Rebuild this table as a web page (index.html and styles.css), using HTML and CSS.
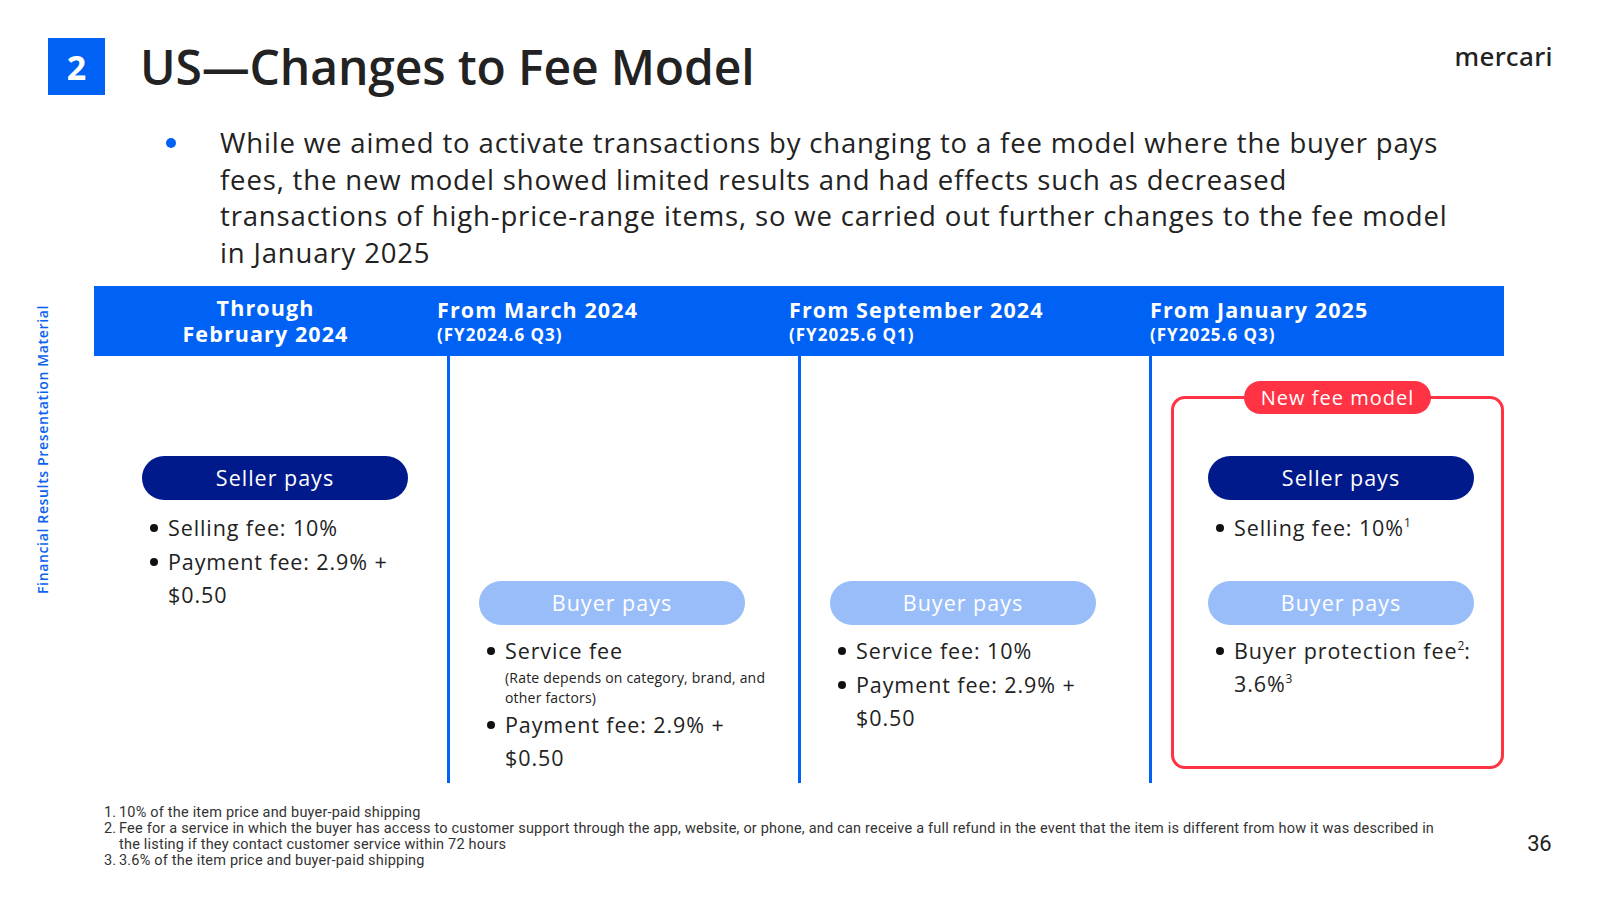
FILE: index.html
```html
<!DOCTYPE html>
<html lang="en">
<head>
<meta charset="utf-8">
<title>US—Changes to Fee Model</title>
<link rel="stylesheet" href="styles.css">
</head>
<body>
<div class="slide">
  <header class="top">
    <div class="badge">2</div>
    <h1 class="title">US—Changes to Fee Model</h1>
    <div class="logo">mercari</div>
  </header>

  <div class="intro">
    <span class="intro-dot"></span>
    <p class="intro-text">While we aimed to activate transactions by changing to a fee model where the buyer pays<br>fees, the new model showed limited results and had effects such as decreased<br>transactions of high-price-range items, so we carried out further changes to the fee model<br>in January 2025</p>
  </div>

  <div class="main">
    <div class="rail"><span class="rail-label">Financial Results Presentation Material</span></div>
    <div class="table">
      <div class="thead">
        <div class="th th-center">Through<br>February 2024</div>
        <div class="th"><span class="th-main">From March 2024</span><span class="th-sub">(FY2024.6 Q3)</span></div>
        <div class="th"><span class="th-main">From September 2024</span><span class="th-sub">(FY2025.6 Q1)</span></div>
        <div class="th"><span class="th-main">From January 2025</span><span class="th-sub">(FY2025.6 Q3)</span></div>
      </div>
      <div class="tbody">
        <div class="col col-1">
          <div class="pill pill-seller">Seller pays</div>
          <ul class="fees">
            <li>Selling fee: 10%</li>
            <li>Payment fee: 2.9% +<br>$0.50</li>
          </ul>
        </div>
        <div class="col col-2">
          <div class="pill pill-buyer">Buyer pays</div>
          <ul class="fees fees-tight">
            <li><span>Service fee<span class="fee-note">(Rate depends on category, brand, and<br>other factors)</span></span></li>
            <li>Payment fee: 2.9% +<br>$0.50</li>
          </ul>
        </div>
        <div class="col col-3">
          <div class="pill pill-buyer">Buyer pays</div>
          <ul class="fees fees-tight">
            <li>Service fee: 10%</li>
            <li>Payment fee: 2.9% +<br>$0.50</li>
          </ul>
        </div>
        <div class="col col-4">
          <div class="newbox">
            <div class="new-tag">New fee model</div>
            <div class="pill pill-seller">Seller pays</div>
            <ul class="fees">
              <li><span>Selling fee: 10%<sup>1</sup></span></li>
            </ul>
            <div class="pill pill-buyer pill-gap">Buyer pays</div>
            <ul class="fees fees-tight">
              <li><span>Buyer protection fee<sup>2</sup>:<br>3.6%<sup>3</sup></span></li>
            </ul>
          </div>
        </div>
      </div>
    </div>
  </div>

  <footer class="foot">
    <ol class="notes">
      <li><span class="num">1.</span><span>10% of the item price and buyer-paid shipping</span></li>
      <li><span class="num">2.</span><span>Fee for a service in which the buyer has access to customer support through the app, website, or phone, and can receive a full refund in the event that the item is different from how it was described in<br>the listing if they contact customer service within 72 hours</span></li>
      <li><span class="num">3.</span><span>3.6% of the item price and buyer-paid shipping</span></li>
    </ol>
    <div class="page">36</div>
  </footer>
</div>
</body>
</html>
```

FILE: styles.css
```css
* { box-sizing: border-box; margin: 0; padding: 0; }

html, body {
  width: 1600px;
  height: 900px;
  background: #ffffff;
}

body {
  font-family: "Open Sans", "Noto Sans", sans-serif;
  color: #222222;
  overflow: hidden;
}

.slide {
  width: 1600px;
  height: 900px;
  display: flex;
  flex-direction: column;
}

/* ---------- header ---------- */
.top {
  display: flex;
  align-items: center;
  padding-top: 38px;
  height: 95px;
}

.badge {
  width: 57px;
  height: 57px;
  margin-left: 48px;
  background: #0062f5;
  color: #ffffff;
  font-size: 34px;
  font-weight: 700;
  display: flex;
  align-items: center;
  justify-content: center;
}

.title {
  margin-left: 35px;
  font-size: 48px;
  font-weight: 600;
  color: #222222;
  letter-spacing: -0.15px;
  line-height: 57px;
}

.logo {
  margin-left: auto;
  margin-right: 47px;
  align-self: flex-start;
  margin-top: 3px;
  font-family: "Noto Sans", sans-serif;
  font-size: 26px;
  font-weight: 500;
  letter-spacing: 0.4px;
  color: #222222;
  line-height: 30px;
}

/* ---------- intro ---------- */
.intro {
  display: flex;
  margin-top: 30px;
  padding-left: 166px;
}

.intro-dot {
  flex: none;
  width: 10px;
  height: 10px;
  border-radius: 50%;
  background: #0062f5;
  margin-top: 13px;
}

.intro-text {
  margin-left: 44px;
  font-size: 27.5px;
  letter-spacing: 0.85px;
  line-height: 36.7px;
  color: #222222;
  white-space: nowrap;
}

/* ---------- main ---------- */
.main {
  display: flex;
  margin-top: 14px;
  height: 497px;
}

.rail {
  width: 94px;
  flex: none;
  display: flex;
  justify-content: flex-start;
  padding-left: 33px;
  padding-top: 20px;
}

.rail-label {
  writing-mode: vertical-rl;
  transform: rotate(180deg);
  font-size: 14px;
  letter-spacing: 0.65px;
  font-weight: 600;
  color: #0a62f0;
  white-space: nowrap;
  height: 288px;
  text-align: left;
}

.table {
  width: 1410px;
  display: flex;
  flex-direction: column;
}

.thead {
  height: 70px;
  background: #0062f5;
  display: grid;
  grid-template-columns: 343px 352px 361px 1fr;
  color: #ffffff;
  font-weight: 700;
}

.th {
  display: flex;
  flex-direction: column;
  justify-content: center;
  padding-top: 1px;
}

.th-center {
  text-align: center;
  font-size: 21.5px;
  letter-spacing: 1.1px;
  line-height: 26px;
  padding-top: 0;
}

.th-main {
  font-size: 21.5px;
  letter-spacing: 1.1px;
  line-height: 26px;
}

.th-sub {
  font-size: 17px;
  letter-spacing: 1px;
  line-height: 23px;
}

.tbody {
  flex: 1;
  display: grid;
  grid-template-columns: 353px 351px 351px 1fr;
}

.col {
  display: flex;
  flex-direction: column;
  align-items: flex-start;
}

.col-2, .col-3, .col-4 {
  border-left: 3px solid #0062f5;
}

.col-1 { padding: 100px 0 0 48px; }
.col-2 { padding: 225px 0 0 29px; }
.col-3 { padding: 225px 0 0 29px; }
.col-4 { padding: 40px 0 14px 19px; }

.pill {
  width: 266px;
  height: 44px;
  border-radius: 22px;
  color: #ffffff;
  font-size: 21.5px;
  letter-spacing: 1px;
  display: flex;
  align-items: center;
  justify-content: center;
  flex: none;
}

.pill-seller { background: #001a8c; }
.pill-buyer { background: #99bdf8; }

.fees {
  list-style: none;
  margin-top: 11px;
  font-size: 21.5px;
  letter-spacing: 0.9px;
  line-height: 33.7px;
  color: #222222;
}

.fees-tight { margin-top: 9px; }

.fees li {
  display: flex;
  align-items: flex-start;
  white-space: nowrap;
}

.fees li::before {
  content: "";
  flex: none;
  width: 8px;
  height: 8px;
  border-radius: 50%;
  background: #111111;
  margin: 13px 10px 0 8px;
}

.fees sup {
  font-size: 12px;
  line-height: 0;
  letter-spacing: 0;
  vertical-align: 9px;
}

.fee-note {
  display: block;
  font-size: 14px;
  letter-spacing: 0.2px;
  line-height: 20px;
}

/* ---------- new fee model box ---------- */
.newbox {
  flex: 1;
  align-self: stretch;
  border: 3px solid #ff3344;
  border-radius: 14px;
  display: flex;
  flex-direction: column;
  align-items: flex-start;
  padding-left: 34px;
}

.new-tag {
  align-self: center;
  margin-top: -18px;
  margin-left: -34px;
  height: 33px;
  padding: 0 17px;
  border-radius: 17px;
  background: #ff3344;
  color: #ffffff;
  font-size: 20px;
  letter-spacing: 1px;
  display: flex;
  align-items: center;
}

.newbox .pill-seller { margin-top: 42px; }
.newbox .pill-gap { margin-top: 36px; }

/* ---------- footer ---------- */
.foot {
  margin-top: 22px;
  display: flex;
  align-items: flex-start;
  padding-left: 104px;
}

.notes {
  list-style: none;
  font-family: "Roboto", "Liberation Sans", sans-serif;
  font-size: 14.5px;
  letter-spacing: 0.2px;
  line-height: 16px;
  color: #333333;
  width: 1380px;
}

.notes li {
  display: flex;
  white-space: nowrap;
}

.notes .num {
  width: 15px;
  flex: none;
}

.page {
  margin-left: auto;
  margin-right: 49px;
  margin-top: 26px;
  font-family: "Roboto", "Liberation Sans", sans-serif;
  font-size: 22px;
  color: #222222;
  letter-spacing: -0.5px;
}
```
